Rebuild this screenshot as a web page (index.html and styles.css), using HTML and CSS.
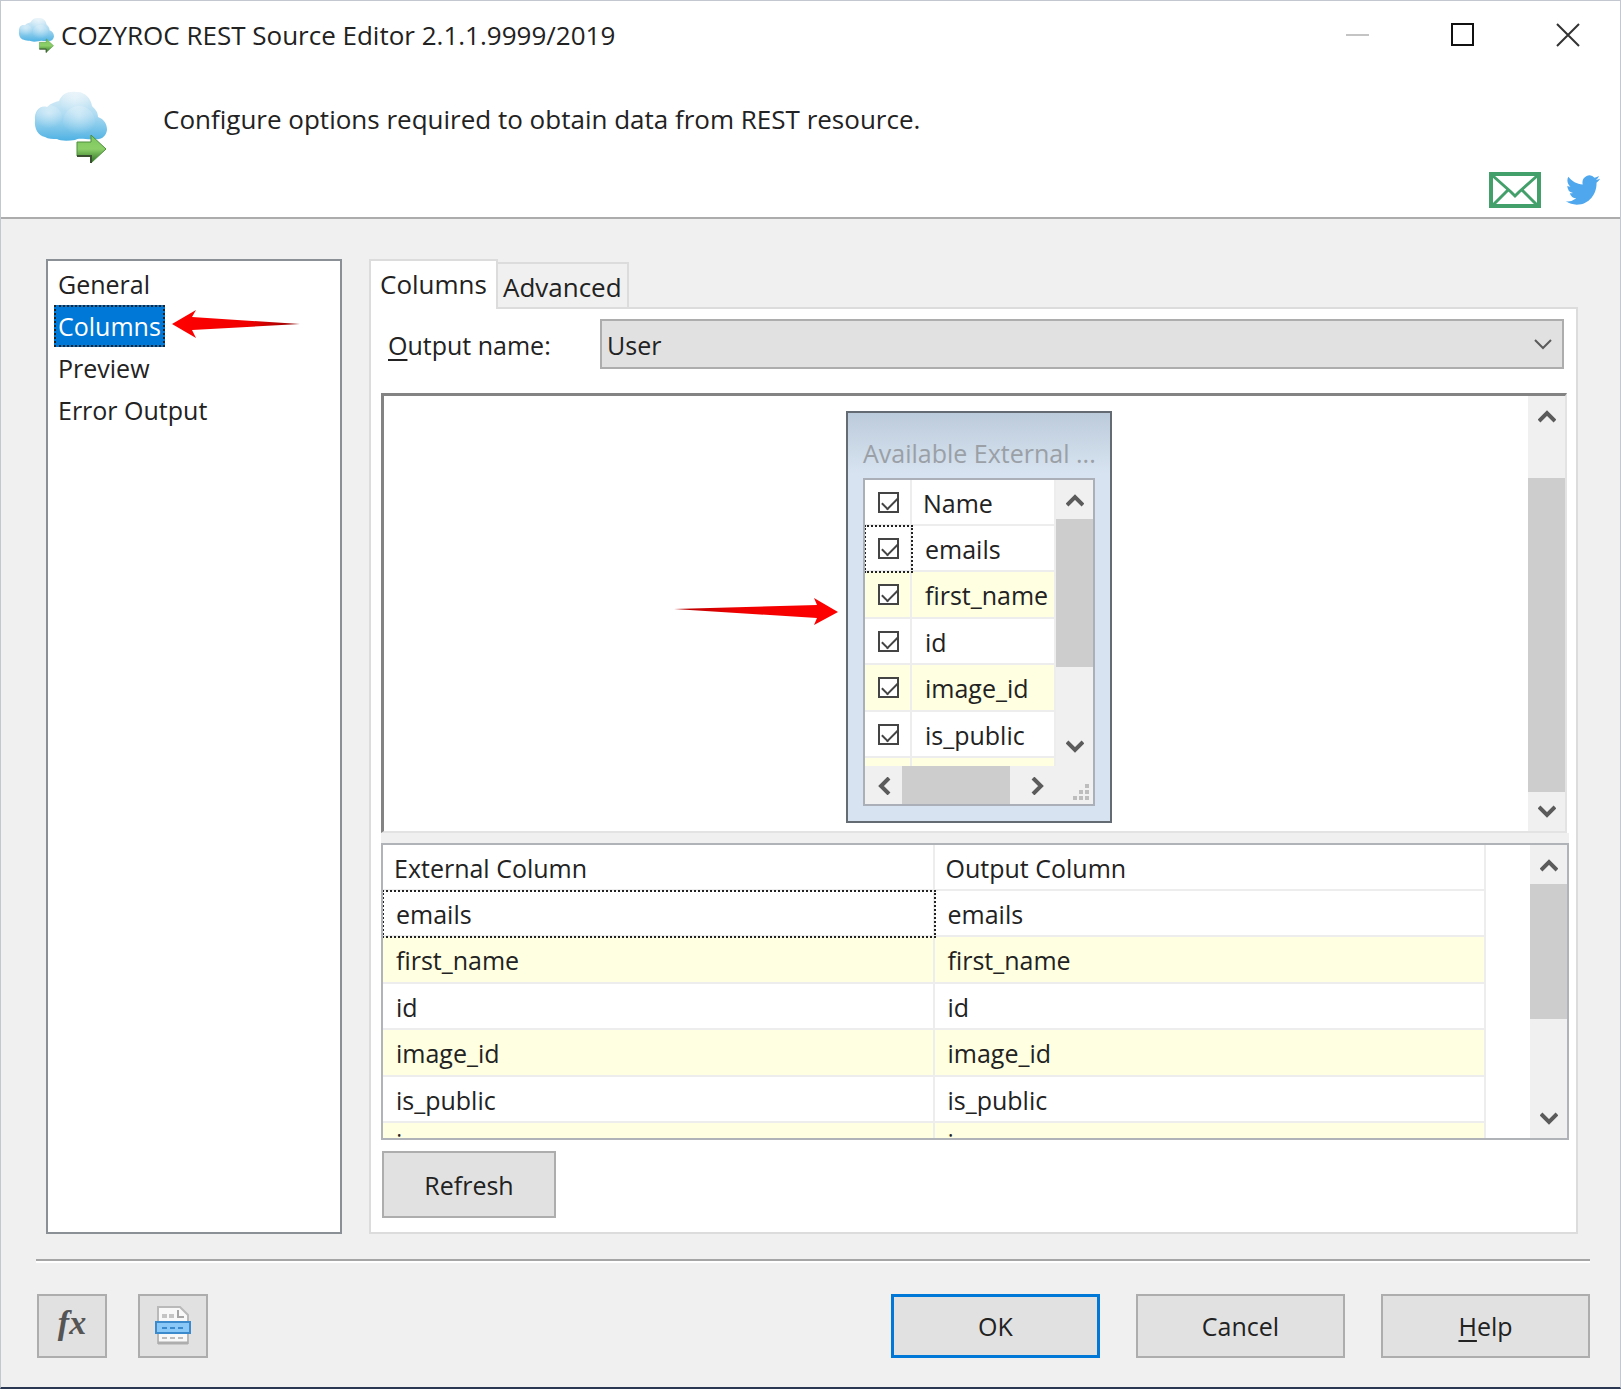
FILE: index.html
```html
<!DOCTYPE html>
<html lang="en">
<head>
    <meta charset="UTF-8">
    <meta name="viewport" content="width=device-width, initial-scale=1.0">
    <title>COZYROC REST Source Editor</title>
    <link rel="stylesheet" href="styles.css">
</head>
<body>
    <!-- shared shapes -->
    <svg class="defs" width="0" height="0" aria-hidden="true">
        <defs>
            <linearGradient id="sky" x1="0" y1="0" x2="0" y2="1">
                <stop offset="0" stop-color="#e4f1f8"/>
                <stop offset="0.45" stop-color="#b0dcf2"/>
                <stop offset="1" stop-color="#4fb2e3"/>
            </linearGradient>
            <radialGradient id="puff" cx="0.5" cy="0.3" r="0.6">
                <stop offset="0" stop-color="#ffffff" stop-opacity="0.4"/>
                <stop offset="1" stop-color="#ffffff" stop-opacity="0"/>
            </radialGradient>
            <linearGradient id="leaf" x1="0" y1="0" x2="0" y2="1">
                <stop offset="0" stop-color="#7cc65c"/>
                <stop offset="0.5" stop-color="#8ccf69"/>
                <stop offset="1" stop-color="#2c6f22"/>
            </linearGradient>
            <linearGradient id="fade-left" x1="1" y1="0" x2="0" y2="0">
                <stop offset="0" stop-color="#8a0000"/>
                <stop offset="0.4" stop-color="#f00000"/>
                <stop offset="1" stop-color="#ff0000"/>
            </linearGradient>
            <linearGradient id="fade-right" x1="0" y1="0" x2="1" y2="0">
                <stop offset="0" stop-color="#b00000"/>
                <stop offset="0.4" stop-color="#f00000"/>
                <stop offset="1" stop-color="#ff0000"/>
            </linearGradient>
        </defs>
        <symbol id="cloud" viewBox="0 0 74 74">
            <path fill="url(#sky)" d="M12 47C5 46 1 38 2 30C1 21 7 15 14 17C18 13 22 12 26 11C29 4 35 1 43 2C51 1 58 8 59 16C62 19 65 22 65 27C71 29 74 34 74 40C73 46 69 50 62 49C54 50 46 47 42 50C35 51 27 51 24 49C20 49 15 49 12 47Z"/>
            <circle cx="42" cy="14" r="14" fill="url(#puff)"/>
            <circle cx="16" cy="28" r="13" fill="url(#puff)"/>
            <circle cx="46" cy="32" r="16" fill="url(#puff)"/>
            <path fill="url(#leaf)" stroke="#4d8f3c" d="M44 52H58V45L73 59L58 73V66H44Z"/>
            <path fill="none" stroke="#3a4f30" stroke-width="2" d="M44 66H58V73"/>
        </symbol>
        <symbol id="chevron-up" viewBox="0 0 18 14">
            <path fill="none" stroke="#5b5b5b" stroke-width="4" d="M1 12L9 4L17 12"/>
        </symbol>
        <symbol id="chevron-down" viewBox="0 0 18 14">
            <path fill="none" stroke="#5b5b5b" stroke-width="4" d="M1 2L9 10L17 2"/>
        </symbol>
        <symbol id="chevron-left" viewBox="0 0 14 18">
            <path fill="none" stroke="#5b5b5b" stroke-width="4" d="M12 1L4 9L12 17"/>
        </symbol>
        <symbol id="chevron-right" viewBox="0 0 14 18">
            <path fill="none" stroke="#5b5b5b" stroke-width="4" d="M2 1L10 9L2 17"/>
        </symbol>
    </svg>

    <div class="window">
        <header class="header">
            <div class="titlebar">
                <svg class="title-icon" aria-hidden="true"><use href="#cloud"/></svg>
                <h1>COZYROC REST Source Editor 2.1.1.9999/2019</h1>
                <div class="window-controls">
                    <button type="button" aria-label="Minimize" disabled>
                        <svg width="24" height="24" viewBox="0 0 24 24"><path stroke="#c4c4c4" stroke-width="2" d="M0 12H23"/></svg>
                    </button>
                    <button type="button" aria-label="Maximize">
                        <svg width="24" height="24" viewBox="0 0 24 24"><rect x="1" y="1" width="21" height="21" fill="none" stroke="#111" stroke-width="2"/></svg>
                    </button>
                    <button type="button" aria-label="Close">
                        <svg width="24" height="24" viewBox="0 0 24 24"><path stroke="#333" stroke-width="2" d="M1 1L23 23M23 1L1 23"/></svg>
                    </button>
                </div>
            </div>
            <div class="intro">
                <svg class="intro-icon" aria-hidden="true"><use href="#cloud"/></svg>
                <p>Configure options required to obtain data from REST resource.</p>
            </div>
            <div class="social">
                <a href="#mail" aria-label="Email">
                    <svg width="52" height="36" viewBox="0 0 52 36" fill="none" stroke="#43a06b">
                        <rect x="2" y="2" width="48" height="32" stroke-width="4"/>
                        <path stroke-width="3" d="M4 4L22 20L26 24L30 20L48 4M4 33L19 18M48 33L33 18"/>
                    </svg>
                </a>
                <a href="#twitter" aria-label="Twitter">
                    <svg width="34" height="30" viewBox="0 2 24 20" preserveAspectRatio="none">
                        <path fill="#4fa8ee" d="M23.953 4.57a10 10 0 01-2.825.775 4.958 4.958 0 002.163-2.723c-.951.555-2.005.959-3.127 1.184a4.92 4.92 0 00-8.384 4.482C7.69 8.095 4.067 6.13 1.64 3.162a4.822 4.822 0 00-.666 2.475c0 1.71.87 3.213 2.188 4.096a4.904 4.904 0 01-2.228-.616v.06a4.923 4.923 0 003.946 4.827 4.996 4.996 0 01-2.212.085 4.936 4.936 0 004.604 3.417 9.867 9.867 0 01-6.102 2.105c-.39 0-.779-.023-1.17-.067a13.995 13.995 0 007.557 2.209c9.053 0 13.998-7.496 13.998-13.985 0-.21 0-.42-.015-.63A9.935 9.935 0 0024 4.59z"/>
                    </svg>
                </a>
            </div>
        </header>

        <main class="content">
            <nav class="sidebar">
                <a href="#general">General</a>
                <a href="#columns" class="selected">Columns
                    <svg class="arrow arrow-left" width="128" height="28" viewBox="0 0 128 28" aria-hidden="true">
                        <path fill="url(#fade-left)" d="M0 14L24 0L20 7L128 14L20 20L24 28Z"/>
                    </svg>
                </a>
                <a href="#preview">Preview</a>
                <a href="#error-output">Error Output</a>
            </nav>

            <section class="tabs">
                <div class="tab-list" role="tablist">
                    <button type="button" role="tab" class="tab active" aria-selected="true">Columns</button>
                    <button type="button" role="tab" class="tab" aria-selected="false">Advanced</button>
                </div>

                <div class="panel" role="tabpanel">
                    <div class="field">
                        <label for="outputName"><u>O</u>utput name:</label>
                        <div class="select-wrap">
                            <select id="outputName">
                                <option>User</option>
                            </select>
                            <svg width="18" height="12" viewBox="0 0 18 12" aria-hidden="true"><path fill="none" stroke="#5b5b5b" stroke-width="2" d="M1 2L9 10L17 2"/></svg>
                        </div>
                    </div>

                    <div class="canvas">
                        <div class="canvas-area">
                            <svg class="arrow arrow-right" width="164" height="28" viewBox="0 0 164 28" aria-hidden="true">
                                <path fill="url(#fade-right)" d="M0 11L143 7L140 0L164 14L140 27L143 20Z"/>
                            </svg>
                            <div class="source-box">
                                <h2>Available External ...</h2>
                                <div class="source-list">
                                    <div class="source-rows">
                                        <table class="grid">
                                            <thead>
                                                <tr><th class="check"><input type="checkbox" aria-label="Select all" checked></th><th>Name</th></tr>
                                            </thead>
                                            <tbody>
                                                <tr><td class="check focused"><input type="checkbox" id="c1" checked></td><td><label for="c1">emails</label></td></tr>
                                                <tr><td class="check"><input type="checkbox" id="c2" checked></td><td><label for="c2">first_name</label></td></tr>
                                                <tr><td class="check"><input type="checkbox" id="c3" checked></td><td><label for="c3">id</label></td></tr>
                                                <tr><td class="check"><input type="checkbox" id="c4" checked></td><td><label for="c4">image_id</label></td></tr>
                                                <tr><td class="check"><input type="checkbox" id="c5" checked></td><td><label for="c5">is_public</label></td></tr>
                                                <tr><td class="check"></td><td></td></tr>
                                            </tbody>
                                        </table>
                                    </div>
                                    <div class="scrollbar">
                                        <button type="button" aria-label="Scroll up"><svg width="18" height="14"><use href="#chevron-up"/></svg></button>
                                        <div class="thumb thumb-source"></div>
                                        <div class="track"></div>
                                        <button type="button" aria-label="Scroll down"><svg width="18" height="14"><use href="#chevron-down"/></svg></button>
                                    </div>
                                    <div class="scrollbar horizontal">
                                        <button type="button" aria-label="Scroll left"><svg width="14" height="18"><use href="#chevron-left"/></svg></button>
                                        <div class="thumb thumb-wide"></div>
                                        <div class="track"></div>
                                        <button type="button" aria-label="Scroll right"><svg width="14" height="18"><use href="#chevron-right"/></svg></button>
                                    </div>
                                    <div class="grip">
                                        <svg width="17" height="17" viewBox="0 0 17 17" fill="#bdbdbd" aria-hidden="true">
                                            <path d="M12 0h4v4h-4zM6 6h4v4h-4zM12 6h4v4h-4zM0 12h4v4h-4zM6 12h4v4h-4zM12 12h4v4h-4z"/>
                                        </svg>
                                    </div>
                                </div>
                            </div>
                        </div>
                        <div class="scrollbar">
                            <button type="button" aria-label="Scroll up"><svg width="18" height="14"><use href="#chevron-up"/></svg></button>
                            <div class="track"></div>
                            <div class="thumb thumb-canvas"></div>
                            <button type="button" aria-label="Scroll down"><svg width="18" height="14"><use href="#chevron-down"/></svg></button>
                        </div>
                    </div>

                    <div class="mapping">
                        <div class="mapping-rows">
                            <table class="grid">
                                <thead>
                                    <tr><th>External Column</th><th>Output Column</th></tr>
                                </thead>
                                <tbody>
                                    <tr><td class="focused">emails</td><td>emails</td></tr>
                                    <tr><td>first_name</td><td>first_name</td></tr>
                                    <tr><td>id</td><td>id</td></tr>
                                    <tr><td>image_id</td><td>image_id</td></tr>
                                    <tr><td>is_public</td><td>is_public</td></tr>
                                    <tr class="last"><td>i</td><td>i</td></tr>
                                </tbody>
                            </table>
                        </div>
                        <div class="scrollbar">
                            <button type="button" aria-label="Scroll up"><svg width="18" height="14"><use href="#chevron-up"/></svg></button>
                            <div class="thumb thumb-mapping"></div>
                            <div class="track"></div>
                            <button type="button" aria-label="Scroll down"><svg width="18" height="14"><use href="#chevron-down"/></svg></button>
                        </div>
                    </div>

                    <button type="button" class="btn refresh">Refresh</button>
                </div>
            </section>
        </main>

        <footer class="footer">
            <div class="tools">
                <button type="button" class="btn tool fx" aria-label="Expressions"><i>fx</i></button>
                <button type="button" class="btn tool" aria-label="Document">
                    <svg width="36" height="40" viewBox="0 0 36 40">
                        <path fill="#f8f8f8" stroke="#b9b9b9" stroke-width="2" d="M3 1H25L33 9V37H3Z"/>
                        <path fill="none" stroke="#a5a5a5" stroke-width="2" d="M23 4V11H29"/>
                        <path stroke="#c4c4c4" stroke-width="4" stroke-dasharray="5 2" d="M7 10H19"/>
                        <path stroke="#bcbcbc" stroke-width="2" stroke-dasharray="5 3" d="M7 32H29"/>
                        <path stroke="#adadad" stroke-width="3" d="M3 37H33"/>
                        <rect x="1" y="16" width="34" height="11" fill="#8ac8f8" stroke="#3b8acb" stroke-width="2"/>
                        <path stroke="#3b8acb" stroke-width="2" stroke-dasharray="5 3" d="M7 22H29"/>
                    </svg>
                </button>
            </div>
            <button type="button" class="btn action primary">OK</button>
            <button type="button" class="btn action">Cancel</button>
            <button type="button" class="btn action"><span><u>H</u>elp</span></button>
        </footer>
    </div>
</body>
</html>
```
FILE: styles.css
```css
* {
    box-sizing: border-box;
}

body {
    margin: 0;
    font-family: 'Open Sans', 'Noto Sans', sans-serif;
    font-size: 25px;
    line-height: 36px;
    color: #222;
    background-color: #f0f0f0;
}

h1, h2, p {
    margin: 0;
    font-size: 26px;
    font-weight: normal;
}

button, select {
    font: inherit;
    color: inherit;
}

svg {
    display: block;
}

u {
    text-underline-offset: 4px;
    text-decoration-thickness: 2px;
}

.defs {
    position: absolute;
}

.window {
    min-height: 100vh;
    display: flex;
    flex-direction: column;
    border: 1px solid #c3c7d0;
    border-bottom: 2px solid #2b3853;
}

/* header */
.header {
    background-color: #fff;
    border-bottom: 2px solid #acacac;
}

.titlebar {
    display: flex;
    align-items: center;
    height: 68px;
    padding-left: 17px;
}

.title-icon {
    width: 36px;
    height: 36px;
    margin-right: 7px;
}

.window-controls {
    display: flex;
    margin-left: auto;
}

.window-controls button {
    display: flex;
    align-items: center;
    justify-content: center;
    width: 105px;
    height: 66px;
    padding: 0;
    border: none;
    background: none;
}

.intro {
    display: flex;
    gap: 56px;
    padding: 21px 32px 0;
}

.intro p {
    padding-top: 11px;
}

.intro-icon {
    width: 74px;
    height: 74px;
}

.social {
    display: flex;
    justify-content: flex-end;
    align-items: center;
    gap: 25px;
    padding: 8px 20px 9px;
}

/* body */
.content {
    flex: 1;
    display: flex;
    gap: 27px;
    padding: 40px 42px 25px 45px;
}

.sidebar {
    width: 296px;
    padding: 2px 6px;
    background-color: #fff;
    border: 2px solid #8b9097;
}

.sidebar a {
    display: table;
    position: relative;
    height: 42px;
    padding: 1px 2px;
    border: 2px solid transparent;
    line-height: 36px;
    color: inherit;
    text-decoration: none;
}

.sidebar a.selected {
    color: #fff;
    background-color: #0078d7;
    border: 2px dotted #222;
}

.arrow {
    position: absolute;
}

.arrow-left {
    left: 116px;
    top: 3px;
}

.arrow-right {
    left: 290px;
    top: 202px;
}

.tabs {
    flex: 1;
    display: flex;
    flex-direction: column;
    min-width: 0;
}

.tab-list {
    display: flex;
    align-items: flex-end;
}

.tab {
    height: 45px;
    padding: 2px 5px 0;
    border: 2px solid #dcdcdc;
    border-left: none;
    border-bottom: none;
    background-color: #f0f0f0;
    font-size: 26px;
}

.tab.active {
    height: 50px;
    margin-bottom: -2px;
    padding: 0 9px 2px;
    border-left: 2px solid #dcdcdc;
    background-color: #fff;
    z-index: 1;
}

.panel {
    flex: 1;
    display: flex;
    flex-direction: column;
    padding: 10px 7px 14px 10px;
    background-color: #fff;
    border: 2px solid #dcdcdc;
}

.field {
    display: flex;
    align-items: center;
    margin-bottom: 24px;
    padding: 0 5px 0 7px;
}

.field label {
    width: 212px;
    padding-top: 2px;
}

.select-wrap {
    position: relative;
    flex: 1;
}

.select-wrap select {
    appearance: none;
    display: block;
    width: 100%;
    height: 50px;
    padding: 2px 5px 0;
    background-color: #e1e1e1;
    border: 2px solid #adadad;
    border-radius: 0;
}

.select-wrap svg {
    position: absolute;
    right: 12px;
    top: 19px;
    pointer-events: none;
}

/* canvas with the list of available columns */
.canvas {
    flex: 1;
    display: flex;
    margin-right: 2px;
    border: 2px solid #e3e3e3;
    border-top: 3px solid #838383;
    border-left: 3px solid #838383;
}

.canvas-area {
    position: relative;
    flex: 1;
}

.source-box {
    position: absolute;
    left: 462px;
    top: 15px;
    width: 266px;
    padding: 22px 15px 15px;
    border: 2px solid #646b73;
    background: linear-gradient(#bccbdb, #d7e3f0 60px);
}

.source-box h2 {
    margin-bottom: 7px;
    font-size: 25px;
    line-height: 36px;
    color: #9aa0a6;
    white-space: nowrap;
}

.source-list {
    display: grid;
    grid-template-columns: 1fr 37px;
    grid-template-rows: 286px 38px;
    border: 2px solid #abb0b8;
    background-color: #f0f0f0;
}

.source-rows {
    overflow: hidden;
    background-color: #fff;
}

.grip {
    display: flex;
    align-items: flex-end;
    justify-content: flex-end;
    padding: 3px;
}

/* scrollbars */
.scrollbar {
    display: flex;
    flex-direction: column;
    width: 37px;
    background-color: #f0f0f0;
}

.scrollbar.horizontal {
    flex-direction: row;
    width: auto;
}

.scrollbar button {
    display: flex;
    align-items: center;
    justify-content: center;
    flex: none;
    width: 37px;
    height: 39px;
    padding: 0;
    border: none;
    background: none;
}

.track {
    flex: 1;
}

.thumb {
    background-color: #cdcdcd;
}

.thumb-source {
    height: 148px;
}

.thumb-wide {
    width: 108px;
}

.thumb-canvas {
    height: 314px;
}

.thumb-mapping {
    height: 135px;
}

/* tables */
.grid {
    width: 100%;
    table-layout: fixed;
    border-collapse: separate;
    border-spacing: 0;
}

.grid th,
.grid td {
    height: 46px;
    padding: 1px 11px 0;
    border-right: 2px solid #ededed;
    border-bottom: 2px solid #ededed;
    font-weight: normal;
    text-align: left;
}

.grid td {
    padding: 1px 13px 0;
}

.grid tr:nth-child(even) td {
    height: 47px;
    background-color: #ffffe1;
}

.grid .last td {
    padding-top: 4px;
    line-height: 30px;
    vertical-align: top;
}

.grid .check {
    width: 47px;
    padding: 0 0 0 13px;
}

.grid .focused {
    outline: 2px dotted #222;
    outline-offset: -1px;
}

input[type="checkbox"] {
    appearance: none;
    display: block;
    width: 21px;
    height: 21px;
    margin: 0;
    border: 2px solid #444;
    background-color: #fff;
}

input[type="checkbox"]:checked::before {
    content: '';
    display: block;
    width: 14px;
    height: 7px;
    margin: 3px 0 0 2px;
    border: solid #444;
    border-width: 0 0 2px 2px;
    transform: rotate(-45deg);
}

.mapping {
    display: flex;
    height: 297px;
    margin: 10px 0 11px;
    border: 2px solid #b0b3b8;
    box-shadow: 0 -10px #f0f0f0;
}

.mapping-rows {
    flex: 1;
    overflow: hidden;
    padding-right: 44px;
}

/* buttons */
.btn {
    display: flex;
    align-items: center;
    justify-content: center;
    padding: 0;
    background-color: #e1e1e1;
    border: 2px solid #adadad;
}

.refresh {
    width: 174px;
    height: 67px;
    margin-left: 1px;
}

.footer {
    display: flex;
    gap: 36px;
    margin: 0 30px 0 35px;
    padding: 33px 0 29px;
    border-top: 2px solid #a5a5a5;
    box-shadow: inset 0 2px #fff;
}

.tools {
    display: flex;
    gap: 31px;
    margin-right: auto;
    padding-left: 1px;
}

.tool {
    width: 70px;
    height: 64px;
}

.fx {
    padding-bottom: 6px;
    font-family: 'Liberation Serif', serif;
    font-size: 34px;
    font-weight: bold;
    color: #555;
}

.action {
    width: 209px;
    height: 64px;
}

.primary {
    border: 3px solid #0078d7;
}
```
